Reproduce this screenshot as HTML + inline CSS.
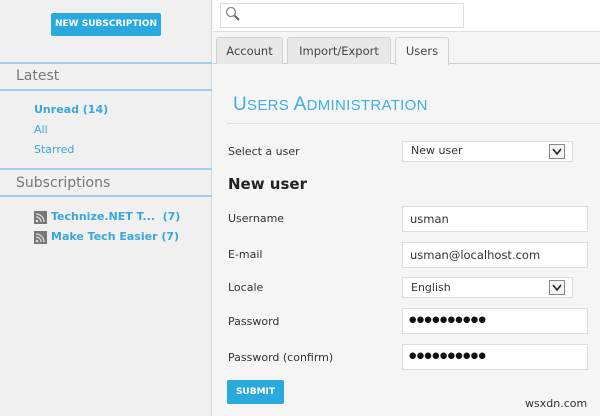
<!DOCTYPE html>
<html><head><style>
*{box-sizing:border-box;margin:0;padding:0}
body{width:600px;height:416px;overflow:hidden;font-family:"DejaVu Sans","Liberation Sans",sans-serif;background:#f5f5f5;position:relative;font-size:11px;color:#333}
.a{position:absolute}
#side{left:0;top:0;width:212px;height:416px;background:#f0f0f0;border-right:1px solid #d8d8d8}
.btn{background:#2aa9de;color:#fff;font-weight:bold;font-size:9px;border-radius:2px;text-align:center}
.hl{left:0;width:212px;height:2px;background:#9fd0ea}
.hd{left:16px;font-size:14px;color:#777}
.lk{left:34px;color:#3aa7da;font-size:11px}
.inp{background:#fff;border:1px solid #ddd}
.lbl{left:228px;font-size:11px;color:#333}
.tab{top:37px;height:27px;background:#e8e8e8;border:1px solid #d0d0d0;border-bottom:none;font-size:11.5px;color:#444;text-align:center;line-height:26px;border-radius:3px 3px 0 0}
.dots{font-size:8.5px;letter-spacing:0.3px;color:#111}
.arr{width:16px;height:15px;border:1px solid #888;background:#f4f4f4}
</style></head><body>
<div id="side" class="a"></div>
<div class="a btn" style="left:51px;top:13px;width:110px;height:23px;line-height:23px">NEW SUBSCRIPTION</div>
<div class="a hl" style="top:62px"></div>
<div class="a hd" style="top:68px">Latest</div>
<div class="a hl" style="top:89px"></div>
<div class="a lk" style="top:103px;font-weight:bold">Unread (14)</div>
<div class="a lk" style="top:123px">All</div>
<div class="a lk" style="top:143px">Starred</div>
<div class="a hl" style="top:168px"></div>
<div class="a hd" style="top:175px">Subscriptions</div>
<div class="a hl" style="top:195px"></div>
<svg class="a" style="left:34px;top:211px" width="13" height="13"><rect width="13" height="13" fill="#777"/><path d="M2 3a8 8 0 0 1 8 8M2 6a5 5 0 0 1 5 5" fill="none" stroke="#ddd" stroke-width="1.3"/><circle cx="3" cy="10" r="1.3" fill="#ddd"/></svg>
<div class="a lk" style="left:51px;top:210px;font-weight:bold">Technize.NET T... &nbsp;(7)</div>
<svg class="a" style="left:34px;top:231px" width="13" height="13"><rect width="13" height="13" fill="#777"/><path d="M2 3a8 8 0 0 1 8 8M2 6a5 5 0 0 1 5 5" fill="none" stroke="#ddd" stroke-width="1.3"/><circle cx="3" cy="10" r="1.3" fill="#ddd"/></svg>
<div class="a lk" style="left:51px;top:230px;font-weight:bold">Make Tech Easier (7)</div>

<div class="a" style="left:213px;top:0;width:387px;height:32px;background:#fff;border-bottom:1px solid #e0e0e0"></div>
<div class="a inp" style="left:220px;top:3px;width:244px;height:25px"></div>
<svg class="a" style="left:225px;top:6px" width="16" height="16"><circle cx="6" cy="6" r="4.5" fill="none" stroke="#888" stroke-width="1.3"/><line x1="9.5" y1="9.5" x2="14" y2="14" stroke="#666" stroke-width="2"/></svg>
<div class="a" style="left:213px;top:63px;width:387px;height:1px;background:#ccc"></div>
<div class="a tab" style="left:216px;width:67px">Account</div>
<div class="a tab" style="left:287px;width:104px">Import/Export</div>
<div class="a tab" style="left:395px;width:54px;background:#f5f5f5;height:28px">Users</div>
<div class="a" style="left:233px;top:94px;color:#3fb0e0;font-size:19px;letter-spacing:0.3px;font-family:'Liberation Sans',sans-serif">U<span style="font-size:15px">SERS</span> A<span style="font-size:15px">DMINISTRATION</span></div>
<div class="a" style="left:227px;top:123px;width:373px;height:1px;background:#ddd"></div>
<div class="a lbl" style="top:145px">Select a user</div>
<div class="a inp" style="left:402px;top:141px;width:171px;height:21px"></div>
<div class="a" style="left:411px;top:144px;font-size:11px">New user</div>
<div class="a arr" style="left:549px;top:144px"></div>
<svg class="a" style="left:552px;top:148px" width="10" height="8"><path d="M1 1L5 6L9 1" fill="none" stroke="#222" stroke-width="1.6"/></svg>
<div class="a" style="left:228px;top:175px;font-size:15px;font-weight:bold;color:#222">New user</div>
<div class="a lbl" style="top:212px">Username</div>
<div class="a inp" style="left:402px;top:206px;width:186px;height:26px"></div>
<div class="a" style="left:410px;top:212px;font-size:11.5px">usman</div>
<div class="a lbl" style="top:248px">E-mail</div>
<div class="a inp" style="left:402px;top:242px;width:186px;height:26px"></div>
<div class="a" style="left:410px;top:248px;font-size:11.5px">usman@localhost.com</div>
<div class="a lbl" style="top:281px">Locale</div>
<div class="a inp" style="left:402px;top:277px;width:171px;height:21px"></div>
<div class="a" style="left:411px;top:281px;font-size:11px">English</div>
<div class="a arr" style="left:549px;top:280px"></div>
<svg class="a" style="left:552px;top:284px" width="10" height="8"><path d="M1 1L5 6L9 1" fill="none" stroke="#222" stroke-width="1.6"/></svg>
<div class="a lbl" style="top:315px">Password</div>
<div class="a inp" style="left:402px;top:308px;width:186px;height:26px"></div>
<div class="a dots" style="left:409px;top:315px">●●●●●●●●●●</div>
<div class="a lbl" style="top:351px">Password (confirm)</div>
<div class="a inp" style="left:402px;top:344px;width:186px;height:26px"></div>
<div class="a dots" style="left:409px;top:351px">●●●●●●●●●●</div>
<div class="a btn" style="left:227px;top:380px;width:57px;height:24px;line-height:24px">SUBMIT</div>
<div class="a" style="left:525px;top:397px;font-size:11px;color:#333">wsxdn.com</div>
</body></html>
